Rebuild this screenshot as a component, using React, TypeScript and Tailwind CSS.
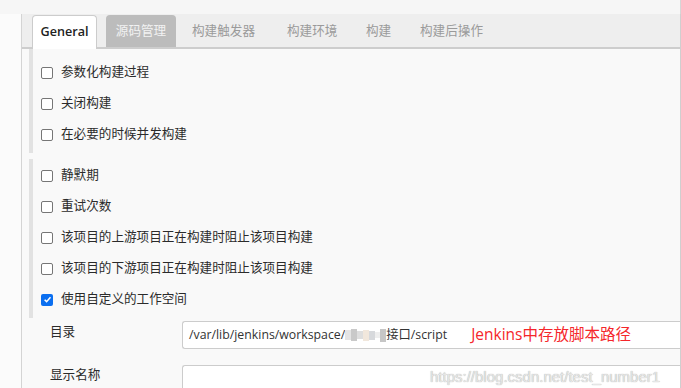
import React from 'react';

const FONT = '"Segoe UI", "Open Sans", "Noto Sans CJK SC", sans-serif';

const TABS = [
  { label: 'General', state: 'active', cls: 'w-[65px] mr-[9px] justify-center' },
  { label: '源码管理', state: 'hover', cls: 'w-[70px] mr-[7px] justify-center' },
  { label: '构建触发器', state: '', cls: 'w-[95px] pl-[9px]' },
  { label: '构建环境', state: '', cls: 'w-[79px] pl-[9px]' },
  { label: '构建', state: '', cls: 'w-[54px] pl-[9px]' },
  { label: '构建后操作', state: '', cls: 'pl-[9px]' },
];

const GROUP_ONE = ['参数化构建过程', '关闭构建', '在必要的时候并发构建'];

const GROUP_TWO = [
  { label: '静默期', checked: false },
  { label: '重试次数', checked: false },
  { label: '该项目的上游项目正在构建时阻止该项目构建', checked: false },
  { label: '该项目的下游项目正在构建时阻止该项目构建', checked: false },
  { label: '使用自定义的工作空间', checked: true },
];

function Checkbox({ checked }: { checked?: boolean }) {
  if (checked) {
    return (
      <span className="w-[12px] h-[12px] rounded-[2px] bg-[#0b6ff0] flex items-center justify-center shrink-0">
        <svg width="9" height="9" viewBox="0 0 10 10">
          <path d="M1.8 5.2 L4 7.4 L8.3 2.6" fill="none" stroke="#fff" strokeWidth="1.7" />
        </svg>
      </span>
    );
  }
  return <span className="w-[12px] h-[12px] rounded-[2px] border border-[#767676] bg-white shrink-0" />;
}

function Row({ label, checked }: { label: string; checked?: boolean }) {
  return (
    <div className="h-[31px] flex items-center pl-[8px] gap-[8px] text-[12.6px] text-[#2b2b2b]">
      <Checkbox checked={checked} />
      <span>{label}</span>
    </div>
  );
}

export default function App() {
  return (
    <div className="w-[681px] h-[388px] overflow-hidden bg-[#f6f6f6] flex flex-col" style={{ fontFamily: FONT }}>
      {/* top band */}
      <div className="h-[14px] shrink-0 border-r border-[#d6d6d6]" />

      <div className="flex flex-1 min-h-0">
        {/* left strip */}
        <div className="w-[22px] shrink-0 bg-[#fbfbfb] border-r border-[#d4d4d4]" />

        <div className="flex-1 bg-[#f9f9f9] border-r border-[#cfcfcf] relative">
          {/* tab bar */}
          <div className="h-[35px] bg-[#eeeeee] border-b-2 border-[#cdcdcd] flex items-end pl-[10px]">
            {TABS.map((t) => (
              <div
                key={t.label}
                className={`flex items-center text-[12.6px] rounded-t-[4px] ${t.cls} ${
                  t.state === 'active'
                    ? 'bg-white border border-b-0 border-[#cccccc] text-[#222] font-semibold -mb-[2px] h-[34px]'
                    : t.state === 'hover'
                    ? 'bg-[#bcbcbc] text-[#f2f2f2] h-[32px]'
                    : 'text-[#9a9a9a] h-[32px]'
                }`}
              >
                {t.label}
              </div>
            ))}
          </div>

          {/* group one */}
          <div className="ml-[7px] border-l-4 border-[#e2e2e2] pt-[8px] pb-[3px]">
            {GROUP_ONE.map((l) => (
              <Row key={l} label={l} />
            ))}
          </div>

          {/* group two */}
          <div className="ml-[7px] mt-[6px] border-l-4 border-[#e2e2e2] pt-[1px] pb-[3px]">
            {GROUP_TWO.map((r) => (
              <Row key={r.label} label={r.label} checked={r.checked} />
            ))}
          </div>

          {/* directory */}
          <div className="flex items-start mt-[3px]">
            <div className="w-[160px] pl-[28px] pt-[2px] text-[12.6px] text-[#2b2b2b]">目录</div>
            <div className="flex-1 h-[28px] bg-white border border-r-0 border-[#cccccc] rounded-l-[3px] flex items-center pl-[6px] text-[12.3px] text-[#333]">
              <span>/var/lib/jenkins/workspace/</span>
              <span className="flex items-center h-[14px]">
                <span className="w-[6px] h-[10px] bg-[#e4e4e4]" />
                <span className="w-[6px] h-[12px] bg-[#c9c9c9]" />
                <span className="w-[6px] h-[8px] bg-[#dedede]" />
                <span className="w-[6px] h-[11px] bg-[#f1e7dc]" />
                <span className="w-[6px] h-[9px] bg-[#d7d9dc]" />
                <span className="w-[5px] h-[6px] bg-[#eeeeee]" />
                <span className="w-[6px] h-[13px] bg-[#c6c6c6]" />
              </span>
              <span>接口/script</span>
              <span className="ml-[24px] text-[15.5px] text-[#f5262b]" style={{ fontFamily: '"Open Sans", "Noto Sans CJK SC", sans-serif' }}>
                Jenkins中存放脚本路径
              </span>
            </div>
          </div>

          {/* display name */}
          <div className="flex items-start mt-[16px]">
            <div className="w-[160px] pl-[28px] pt-[1px] text-[12.6px] text-[#2b2b2b]">显示名称</div>
            <div className="flex-1 h-[28px] bg-white border border-r-0 border-[#cccccc] rounded-l-[3px]" />
          </div>

          {/* watermark */}
          <div
            className="absolute left-[408px] top-[352px] text-[15px] text-[#e6e6e6] whitespace-nowrap"
            style={{ fontFamily: '"Liberation Sans", sans-serif', textShadow: '0 0 1px #9a9a9a' }}
          >
            https://blog.csdn.net/test_number1
          </div>
        </div>
      </div>
    </div>
  );
}
